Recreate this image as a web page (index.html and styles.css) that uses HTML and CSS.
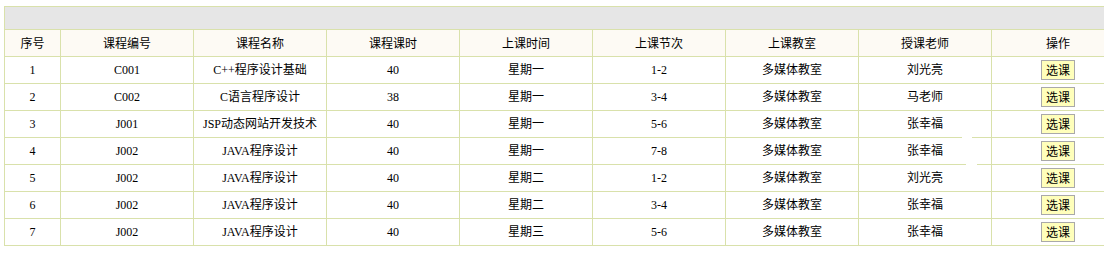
FILE: index.html
```html
<!DOCTYPE html>
<html lang="zh-CN">
<head>
<meta charset="utf-8">
<title>选课</title>
<link rel="stylesheet" href="styles.css">
</head>
<body>
<div class="wrap">
<table class="course-table">
  <colgroup>
    <col class="c-narrow">
    <col class="c-wide"><col class="c-wide"><col class="c-wide"><col class="c-wide">
    <col class="c-wide"><col class="c-wide"><col class="c-wide"><col class="c-wide">
  </colgroup>
  <tr class="title-row"><td colspan="9"></td></tr>
  <tr class="head-row">
    <th>序号</th><th>课程编号</th><th>课程名称</th><th>课程课时</th><th>上课时间</th><th>上课节次</th><th>上课教室</th><th>授课老师</th><th>操作</th>
  </tr>
  <tr><td>1</td><td>C001</td><td>C++程序设计基础</td><td>40</td><td>星期一</td><td>1-2</td><td>多媒体教室</td><td>刘光亮</td><td><button class="pick">选课</button></td></tr>
  <tr><td>2</td><td>C002</td><td>C语言程序设计</td><td>38</td><td>星期一</td><td>3-4</td><td>多媒体教室</td><td>马老师</td><td><button class="pick">选课</button></td></tr>
  <tr><td>3</td><td>J001</td><td>JSP动态网站开发技术</td><td>40</td><td>星期一</td><td>5-6</td><td>多媒体教室</td><td>张幸福</td><td><button class="pick">选课</button></td></tr>
  <tr><td>4</td><td>J002</td><td>JAVA程序设计</td><td>40</td><td>星期一</td><td>7-8</td><td>多媒体教室</td><td>张幸福</td><td><button class="pick">选课</button></td></tr>
  <tr><td>5</td><td>J002</td><td>JAVA程序设计</td><td>40</td><td>星期二</td><td>1-2</td><td>多媒体教室</td><td>刘光亮</td><td><button class="pick">选课</button></td></tr>
  <tr><td>6</td><td>J002</td><td>JAVA程序设计</td><td>40</td><td>星期二</td><td>3-4</td><td>多媒体教室</td><td>张幸福</td><td><button class="pick">选课</button></td></tr>
  <tr><td>7</td><td>J002</td><td>JAVA程序设计</td><td>40</td><td>星期三</td><td>5-6</td><td>多媒体教室</td><td>张幸福</td><td><button class="pick">选课</button></td></tr>
</table>
<span class="gap gap-a"></span>
<span class="gap gap-b"></span>
</div>
</body>
</html>
```
FILE: styles.css
```css
html, body {
  margin: 0;
  padding: 0;
  overflow: hidden;
  background: #ffffff;
}
body {
  font-family: "Liberation Serif", "Noto Sans CJK SC", serif;
  font-size: 12px;
  color: #000000;
}
.wrap {
  position: relative;
  padding: 6px 0 0 4px;
  width: 1130px;
}
.course-table {
  border-collapse: collapse;
  table-layout: fixed;
  width: 1121px;
}
.c-narrow { width: 56px; }
.c-wide { width: 133px; }
.course-table td,
.course-table th {
  border: 1px solid #d9e1ab;
  padding: 0;
  text-align: center;
  vertical-align: middle;
  font-weight: normal;
  line-height: 14px;
}
.course-table tr { height: 27px; }
.course-table .title-row { height: 23px; }
.title-row td { background: #e6e6e6; }
.head-row th {
  background: #fdfaf4;
  font-family: "Noto Sans CJK SC", sans-serif;
  font-size: 12px;
}
.pick {
  display: inline-block;
  box-sizing: border-box;
  width: 34px;
  height: 20px;
  margin: 0;
  padding: 0;
  background: #ffffbb;
  border: 1px solid #a9a9a9;
  border-radius: 0;
  font-family: "Noto Sans CJK SC", sans-serif;
  font-size: 12px;
  line-height: 16px;
  color: #000;
  vertical-align: middle;
}
.gap {
  position: absolute;
  height: 1px;
  background: #ffffff;
}
.gap-a { left: 962px; width: 10px; top: 137px; }
.gap-b { left: 966px; width: 11px; top: 164px; }
```
